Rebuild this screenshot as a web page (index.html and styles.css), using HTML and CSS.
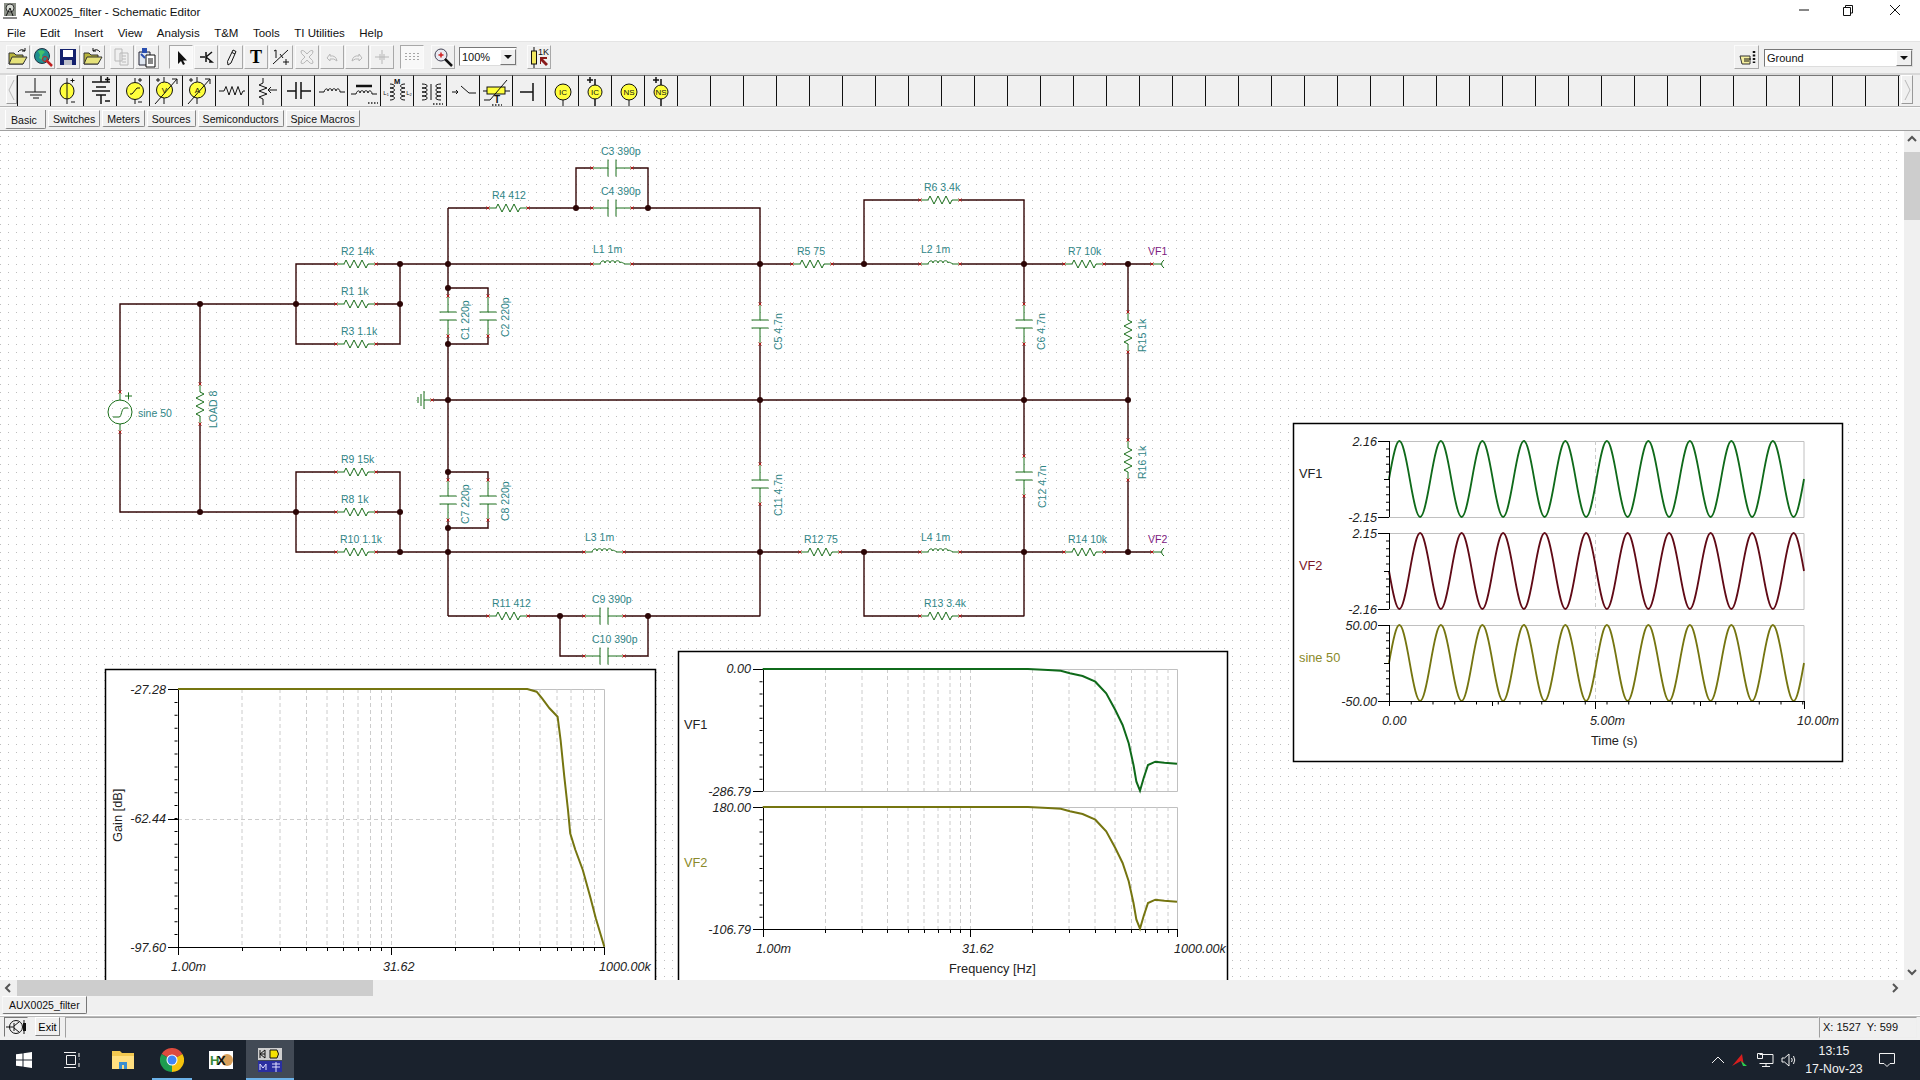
FILE: index.html
```html
<!DOCTYPE html>
<html lang="en">
<head>
<meta charset="utf-8">
<title>AUX0025_filter - Schematic Editor</title>
<link rel="stylesheet" href="styles.css">
</head>
<body>
<header class="titlebar">
  <svg class="appicon" width="16" height="18" viewBox="0 0 16 18"><rect x="2" y="1" width="12" height="13" fill="#8a8f86"/><circle cx="8" cy="6" r="4" fill="#d8dcd4" stroke="#333"/><path class="k" d="M4 14l4-8 3 8M1 16h14"/></svg>
  <span class="title">AUX0025_filter - Schematic Editor</span>
  <div class="winctl">
    <svg width="12" height="12" viewBox="0 0 12 12"><path class="k" d="M1 6H11"/></svg>
    <svg width="12" height="12" viewBox="0 0 12 12"><path class="k" d="M1.500 3.500H8.500V11.500H1.500ZM3.500 3.500V1.500H10.500V9H8.500"/></svg>
    <svg width="12" height="12" viewBox="0 0 12 12"><path class="k" d="M1 1L11 11M11 1L1 11"/></svg>
  </div>
</header>
<nav class="menubar">
  <span>File</span><span>Edit</span><span>Insert</span><span>View</span><span>Analysis</span><span>T&amp;M</span><span>Tools</span><span>TI Utilities</span><span>Help</span>
</nav>
<section class="toolbar">
  <button class="tb"><svg viewBox="0 0 22 22"><path class="folder" d="M2 7H7L9 9H16V18H2Z"/><path class="folder2" d="M2 18L5 11H20L16 18Z"/><path class="k" d="M11 6Q14 2 18 5M18 2V5H15"/></svg></button>
  <button class="tb"><svg viewBox="0 0 22 22"><circle cx="10" cy="10" r="7.500" fill="#1f8f8f" stroke="#234"/><path d="M6 5Q11 3 13 6L10 9L11 14L7 12L8 9Z" fill="#44c26a"/><path d="M14 14L20 20" stroke="#c02020" stroke-width="2.500"/><circle cx="13" cy="13" r="2.500" fill="none" stroke="#c02020"/></svg></button>
  <button class="tb"><svg viewBox="0 0 22 22"><path d="M3 3H19V19H3Z" fill="#14216e"/><rect x="6" y="4" width="10" height="7" fill="#fff"/><rect x="7" y="14" width="8" height="5" fill="#bfc2cc"/></svg></button>
  <button class="tb"><svg viewBox="0 0 22 22"><path class="folder" d="M2 7H7L9 9H16V18H2Z"/><path class="folder2" d="M2 18L5 11H20L16 18Z"/><path class="k" d="M18 6Q15 2 11 5M11 2V5H14"/></svg></button>
  <button class="tb ml4"><svg viewBox="0 0 22 22"><path class="off" d="M4 3H11V15H4ZM9 7H17V19H9Z"/><path class="off" d="M11 10H15M11 13H15M11 16H15"/></svg></button>
  <button class="tb"><svg viewBox="0 0 22 22"><path d="M3 6H14V19H3Z" fill="#dfe6f0" stroke="#223"/><rect x="6" y="2" width="5" height="5" fill="#2a4fb0"/><path d="M10 9H19V21H10Z" fill="#fff" stroke="#111"/><path class="k" d="M12 13H17M12 15H17M12 17H17"/><path d="M5 8L9 12" stroke="#2a4fb0" stroke-width="2"/></svg></button>
  <button class="tb pressed ml9"><svg viewBox="0 0 22 22"><path d="M8 5V18L11 15L13 19L15 18L13 14.500H17Z" fill="#111"/></svg></button>
  <button class="tb"><svg viewBox="0 0 22 22"><path class="k2" d="M5 11H10M11 6V16M11 11L17 6M11 11L17 16H14"/></svg></button>
  <button class="tb"><svg viewBox="0 0 22 22"><path class="k" d="M13 4L16 5.500L11 17L8 19L7.500 15.500ZM12 6.500L15 8"/></svg></button>
  <button class="tb"><span class="serif-t">T</span></button>
  <button class="tb"><svg viewBox="0 0 22 22"><path class="k" d="M4 5L6 4V12M3 18L18 4M13 16H19M16 13V19"/><path class="k" d="M10 8L13 12"/></svg></button>
  <button class="tb ml1"><svg viewBox="0 0 22 22"><path class="off" d="M5 5Q7 3 11 8Q15 3 17 5Q18 7 13 11Q18 15 17 17Q15 19 11 14Q7 19 5 17Q4 15 9 11Q4 7 5 5Z"/></svg></button>
  <button class="tb"><svg viewBox="0 0 22 22"><path class="off" d="M6 12L9 8V10Q15 9 16 15Q13 12 9 13V15Z"/></svg></button>
  <button class="tb"><svg viewBox="0 0 22 22"><path class="off" d="M16 12L13 8V10Q7 9 6 15Q9 12 13 13V15Z"/></svg></button>
  <button class="tb"><svg viewBox="0 0 22 22"><path class="off" d="M11 4V18M4 11H18M9 8V14M13 8V14"/></svg></button>
  <button class="tb pressed ml5"><svg viewBox="0 0 22 22"><path class="griddots" d="M5 7V16M9 7V16M13 7V16M17 7V16"/></svg></button>
  <button class="tb ml6"><svg viewBox="0 0 22 22"><circle cx="9" cy="9" r="6" fill="#eaeaf2" stroke="#445"/><path d="M6.500 9H11.500M9 6.500V11.500" stroke="#d02020" stroke-width="1.500"/><path d="M13 13L20 20" stroke="#111" stroke-width="2.500"/></svg></button>
  <div class="combo zoomcombo ml3"><span>100%</span><i class="drop"></i></div>
  <button class="tb ml9"><svg viewBox="0 0 22 22"><path class="k" d="M6 1V5M6 18V22"/><rect x="3.500" y="5" width="5" height="13" fill="#f2e860" stroke="#111"/><text class="onek" x="10" y="9">1K</text><path d="M12 11H19V13H15L20 18L18 20L13 15V18H12Z" fill="#8a1a1a"/></svg></button>
  <div class="tbright">
    <button class="tb wide"><svg viewBox="0 0 22 22"><path d="M4 10H14V18H6Z" fill="#f6f0a0" stroke="#333"/><path class="k" d="M8 13H15M8 15H13"/><path d="M18 5V17" stroke="#111" stroke-width="2.500" stroke-dasharray="2 1.500"/></svg></button>
    <div class="combo compcombo"><span>Ground</span><i class="drop"></i></div>
  </div>
</section>
<section class="palette">
  <div class="palbtn"><svg width="7" height="22" viewBox="0 0 7 22"><path class="off" d="M6 1L1 11L6 21"/></svg></div>
  <div class="cell"><svg viewBox="0 0 32 30"><path class="k" d="M17 2V16M7 16H28M12 19H24M15 22H21"/></svg></div>
  <div class="cell"><svg viewBox="0 0 32 30"><path class="k" d="M16 2V28M19.500 4.500H23.500M21.500 2.500V6.500M20 26H24"/><ellipse class="y" cx="16" cy="15" rx="7" ry="8"/><path class="k" d="M16 7V23"/></svg></div>
  <div class="cell"><svg viewBox="0 0 32 30"><path class="k2" d="M17 0V6M8 6H26M12 11H22M8 15H26M12 19H22M17 19V28M21 3.500H26M23.500 1V6M21 25H26"/></svg></div>
  <div class="cell"><svg viewBox="0 0 32 30"><path class="k" d="M18 2V28M21 4H25M23 2V6M21 26H25"/><circle class="y" cx="18" cy="15" r="8.500"/><path class="k" d="M13 18H15L20 12H23"/></svg></div>
  <div class="cell"><svg viewBox="0 0 32 30"><path class="k" d="M14 1V28M6 4H10M8 2V6"/><circle class="y" cx="14.500" cy="14" r="8"/><path class="k" d="M5 28L27 3M22 3H27V8"/><text class="pt" x="14.500" y="17">V</text></svg></div>
  <div class="cell"><svg viewBox="0 0 32 30"><path class="k" d="M14 1V28M6 4H10M8 2V6"/><circle class="y" cx="14.500" cy="14" r="8"/><path class="k" d="M5 28L27 3M22 3H27V8"/><text class="pt" x="14.500" y="17">A</text></svg></div>
  <div class="cell"><svg viewBox="0 0 32 30"><path class="k" d="M3 15H8L10 10.500L13 19L16 10.500L19 19L22 10.500L25 19L27 15H29"/></svg></div>
  <div class="cell"><svg viewBox="0 0 32 30"><path class="k" d="M14 2V7L10 9L18 12L10 15L18 18L10 21L14 23V29M28 14H19M22 11L19 14L22 17"/></svg></div>
  <div class="cell"><svg viewBox="0 0 32 30"><path class="k2" d="M5 15H14M19 15H29M14 6V23M19 6V23"/></svg></div>
  <div class="cell"><svg viewBox="0 0 32 30"><path class="k" d="M4 16H9C10 12 13 12 13 15C13 12 17 12 17 15C17 12 21 12 21 15C21 12 25 12 25 16H30"/></svg></div>
  <div class="cell"><svg viewBox="0 0 32 30"><path d="M8 10H24" stroke="#111" stroke-width="2.500"/><path class="k" d="M3 18H8C9 14 12 14 12 17C12 14 16 14 16 17C16 14 20 14 20 17C20 14 24 14 24 18H29"/><path class="dots" d="M20 27H30"/></svg></div>
  <div class="cell"><svg viewBox="0 0 32 30"><text class="pm" x="16" y="7.500">M</text><path class="k" d="M9 8C15 8 15 12 9 12C15 12 15 16 9 16C15 16 15 20 9 20C15 20 15 24 9 24M24 8C18 8 18 12 24 12C18 12 18 16 24 16C18 16 18 20 24 20C18 20 18 24 24 24"/><text class="ps" x="5" y="19">L₁</text><text class="ps" x="28" y="19">L₂</text></svg></div>
  <div class="cell"><svg viewBox="0 0 32 30"><path class="k" d="M8 8C15 8 15 12 8 12C15 12 15 16 8 16C15 16 15 20 8 20C15 20 15 24 8 24M27 8C20 8 20 12 27 12C20 12 20 16 27 16C20 16 20 20 27 20C20 20 20 24 27 24"/><path class="k" d="M17 8V24"/><path class="dots" d="M19 28H29"/></svg></div>
  <div class="cell"><svg viewBox="0 0 32 30"><path class="k" d="M5 16H11M9 14L11 16L9 18M14 10L22 17H29"/></svg></div>
  <div class="cell"><svg viewBox="0 0 32 30"><path class="k" d="M3 15H7M25 15H30"/><rect class="y" x="7" y="11" width="18" height="7"/><path class="k" d="M4 24L10 24L27 4"/><text class="pb" x="17" y="27">T</text><path class="dots" d="M12 29H22"/></svg></div>
  <div class="cell"><svg viewBox="0 0 32 30"><path class="k2" d="M7 16H20M20 7V25"/></svg></div>
  <div class="cell"><svg viewBox="0 0 32 30"><path class="k" d="M17 24V30"/><circle class="y" cx="17" cy="16" r="8"/><text class="pt" x="17" y="19">IC</text></svg></div>
  <div class="cell"><svg viewBox="0 0 32 30"><path class="k2" d="M8 4H14M11 1V7M16 3V30"/><circle class="y" cx="16" cy="16" r="7"/><text class="pt" x="16" y="19">IC</text></svg></div>
  <div class="cell"><svg viewBox="0 0 32 30"><path class="k" d="M17 24V30"/><circle class="y" cx="17" cy="16" r="8"/><text class="pt" x="17" y="19">NS</text></svg></div>
  <div class="cell"><svg viewBox="0 0 32 30"><path class="k2" d="M8 4H14M11 1V7M16 3V30"/><circle class="y" cx="16" cy="16" r="7"/><text class="pt" x="16" y="19">NS</text></svg></div>
  <div class="cells-empty"></div>
  <div class="palbtn right"><svg width="7" height="22" viewBox="0 0 7 22"><path class="off" d="M1 1L6 11L1 21"/></svg></div>
</section>
<section class="tabs">
  <span class="tab on">Basic</span><span class="tab">Switches</span><span class="tab">Meters</span><span class="tab">Sources</span><span class="tab">Semiconductors</span><span class="tab">Spice Macros</span>
</section>
<main class="workspace">
<svg class="canvas" width="1904" height="849" viewBox="0 131 1904 849">
  <defs>
    <pattern id="dots" width="8" height="8" patternUnits="userSpaceOnUse"><rect width="1" height="1" fill="#bdbdbd"/></pattern>
    <g id="pins"><path class="pin" d="M-1.500 -1.500L1.500 1.500M-1.500 1.500L1.500 -1.500M38.500 -1.500L41.500 1.500M38.500 1.500L41.500 -1.500"/></g>
    <g id="R"><path class="g" d="M0 0H8L10 -4L14 4L18 -4L22 4L26 -4L30 4L32 0H40"/><use href="#pins"/></g>
    <g id="C"><path class="g" d="M0 0H16M24 0H40M16 -8.500V8.500M24 -8.500V8.500"/><use href="#pins"/></g>
    <g id="L"><path class="g" d="M0 0H8C9 -4 13 -4 13 -1C13 -4 18 -4 18 -1C18 -4 23 -4 23 -1C23 -4 28 -4 28 -1C28 -3 31 -1 33 0H40"/><use href="#pins"/></g>
    <circle id="n" r="3" class="node"/>
    <path id="wave" d="M0 0c8.800 -50.670 11.950 -50.670 20.750 0s11.950 50.670 20.750 0s11.950 -50.670 20.750 0s11.950 50.670 20.750 0s11.950 -50.670 20.750 0s11.950 50.670 20.750 0s11.950 -50.670 20.750 0s11.950 50.670 20.750 0s11.950 -50.670 20.750 0s11.950 50.670 20.750 0s11.950 -50.670 20.750 0s11.950 50.670 20.750 0s11.950 -50.670 20.750 0s11.950 50.670 20.750 0s11.950 -50.670 20.750 0s11.950 50.670 20.750 0s11.950 -50.670 20.750 0s11.950 50.670 20.750 0s11.950 -50.670 20.750 0s11.950 50.670 20.750 0"/>
    <path id="fcurve" d="M762.700 669H1028L1048 670L1060.800 670.700L1069.900 673.300L1082.600 676L1095.300 681.700L1106.200 693.300L1115.300 710L1122.600 725L1128.700 743.300L1133.500 765L1136.400 781.700L1140 790.700L1143.600 778.300L1148 765L1155.300 761.700L1164.400 762.700L1177 763.700"/>
  </defs>
  <rect x="0" y="131" width="1904" height="849" fill="#fff"/>
  <rect x="0" y="131" width="1904" height="849" fill="url(#dots)"/>

  <path class="w" d="M120 392V304H336M376 304H400M120 432V512H336M376 512H400M200 304V384M200 424V512
    M336 264H296V344H336M376 344H400V264M376 264H592M632 264H792M832 264H920M960 264H1064M1104 264H1152
    M448 208V296M448 336V480M448 520V616M488 208H448M528 208H592M632 208H760V304M760 344V464M760 504V616
    M576 208V168H592M632 168H648V208M448 288H488V296M488 336V344H448
    M432 400H1128M864 264V200H920M960 200H1024V304M1024 344V456M1024 496V616
    M1128 264V312M1128 352V440M1128 480V552
    M336 472H296V552H336M376 472H400V552M376 552H584M624 552H800M840 552H920M960 552H1064M1104 552H1152
    M448 472H488V480M488 520V528H448
    M448 616H488M528 616H584M624 616H760M864 552V616H920M960 616H1024
    M560 616V656H584M624 656H648V616"/>

  <use href="#R" x="336" y="264"/><use href="#R" x="336" y="304"/><use href="#R" x="336" y="344"/>
  <use href="#R" x="488" y="208"/><use href="#C" x="592" y="168"/><use href="#C" x="592" y="208"/>
  <use href="#L" x="592" y="264"/><use href="#R" x="792" y="264"/><use href="#R" x="920" y="200"/>
  <use href="#L" x="920" y="264"/><use href="#R" x="1064" y="264"/>
  <use href="#R" x="336" y="472"/><use href="#R" x="336" y="512"/><use href="#R" x="336" y="552"/>
  <use href="#L" x="584" y="552"/><use href="#R" x="800" y="552"/><use href="#L" x="920" y="552"/><use href="#R" x="1064" y="552"/>
  <use href="#R" x="488" y="616"/><use href="#C" x="584" y="616"/><use href="#C" x="584" y="656"/><use href="#R" x="920" y="616"/>
  <use href="#C" transform="translate(448 296) rotate(90)"/><use href="#C" transform="translate(488 296) rotate(90)"/>
  <use href="#C" transform="translate(448 480) rotate(90)"/><use href="#C" transform="translate(488 480) rotate(90)"/>
  <use href="#C" transform="translate(760 304) rotate(90)"/><use href="#C" transform="translate(1024 304) rotate(90)"/>
  <use href="#C" transform="translate(760 464) rotate(90)"/><use href="#C" transform="translate(1024 456) rotate(90)"/>
  <use href="#R" transform="translate(200 384) rotate(90)"/><use href="#R" transform="translate(1128 312) rotate(90)"/><use href="#R" transform="translate(1128 440) rotate(90)"/>

  <path class="g" d="M120 392V400M120 424V432M125 396H132M128.500 392.500V399.500M432 400H424M424 391V409M421 394V406M418 397V403M1152 264H1161M1164 260Q1159 264 1164 268M1152 552H1161M1164 548Q1159 552 1164 556"/>
  <circle class="g" cx="120" cy="412" r="12"/>
  <path class="g" d="M113 417H119C122 417 121 408 125 408H128"/>
  <path class="pin" d="M118.500 390.500L121.500 393.500M118.500 393.500L121.500 390.500M118.500 430.500L121.500 433.500M118.500 433.500L121.500 430.500M430.500 398.500L433.500 401.500M430.500 401.500L433.500 398.500M1150.500 262.500L1153.500 265.500M1150.500 265.500L1153.500 262.500M1150.500 550.500L1153.500 553.500M1150.500 553.500L1153.500 550.500"/>

  <use href="#n" x="200" y="304"/><use href="#n" x="296" y="304"/><use href="#n" x="400" y="264"/><use href="#n" x="400" y="304"/>
  <use href="#n" x="448" y="264"/><use href="#n" x="448" y="288"/><use href="#n" x="448" y="344"/><use href="#n" x="448" y="400"/>
  <use href="#n" x="448" y="472"/><use href="#n" x="448" y="528"/><use href="#n" x="448" y="552"/><use href="#n" x="400" y="552"/>
  <use href="#n" x="400" y="512"/><use href="#n" x="296" y="512"/><use href="#n" x="200" y="512"/><use href="#n" x="576" y="208"/>
  <use href="#n" x="648" y="208"/><use href="#n" x="760" y="264"/><use href="#n" x="760" y="400"/><use href="#n" x="760" y="552"/>
  <use href="#n" x="864" y="264"/><use href="#n" x="1024" y="264"/><use href="#n" x="1024" y="400"/><use href="#n" x="1128" y="264"/>
  <use href="#n" x="1128" y="400"/><use href="#n" x="864" y="552"/><use href="#n" x="1024" y="552"/><use href="#n" x="1128" y="552"/>
  <use href="#n" x="560" y="616"/><use href="#n" x="648" y="616"/>

  <g class="lb">
    <text x="601" y="155">C3 390p</text><text x="601" y="195">C4 390p</text><text x="492" y="199">R4 412</text>
    <text x="341" y="255">R2 14k</text><text x="341" y="295">R1 1k</text><text x="341" y="335">R3 1.1k</text>
    <text x="593" y="253">L1 1m</text><text x="341" y="463">R9 15k</text><text x="341" y="503">R8 1k</text><text x="340" y="543">R10 1.1k</text>
    <text x="585" y="541">L3 1m</text><text x="804" y="543">R12 75</text><text x="921" y="541">L4 1m</text><text x="1068" y="543">R14 10k</text>
    <text x="492" y="607">R11 412</text><text x="592" y="603">C9 390p</text><text x="592" y="643">C10 390p</text><text x="924" y="607">R13 3.4k</text>
    <text x="797" y="255">R5 75</text><text x="924" y="191">R6 3.4k</text><text x="921" y="253">L2 1m</text><text x="1068" y="255">R7 10k</text>
    <text x="138" y="417">sine 50</text>
    <text transform="translate(469 340) rotate(-90)">C1 220p</text><text transform="translate(509 337) rotate(-90)">C2 220p</text>
    <text transform="translate(782 350) rotate(-90)">C5 4.7n</text><text transform="translate(1045 350) rotate(-90)">C6 4.7n</text>
    <text transform="translate(1146 352) rotate(-90)">R15 1k</text><text transform="translate(217 428) rotate(-90)">LOAD 8</text>
    <text transform="translate(469 524) rotate(-90)">C7 220p</text><text transform="translate(509 521) rotate(-90)">C8 220p</text>
    <text transform="translate(782 516) rotate(-90)">C11 4.7n</text><text transform="translate(1046 508) rotate(-90)">C12 4.7n</text>
    <text transform="translate(1146 479) rotate(-90)">R16 1k</text>
  </g>
  <text class="lb vf" x="1148" y="255">VF1</text><text class="lb vf" x="1148" y="543">VF2</text>

  <!-- time graph -->
  <rect class="frame" x="1293.500" y="423.500" width="549" height="338"/>
  <path class="plot" d="M1389 441.500H1804V517.500H1389M1389 533.500H1804V609.500H1389M1389 625.500H1804V701.500"/>
  <path class="grid" d="M1595.500 441V517M1595.500 533V609M1595.500 625V701"/>
  <use href="#wave" class="t1" x="1389" y="479"/>
  <use href="#wave" class="t2" transform="translate(1389 571) scale(1 -1)"/>
  <use href="#wave" class="t3" x="1389" y="663"/>
  <path class="ax" d="M1389.500 441V517M1378 441.500H1389M1378 517.500H1389M1384 479.500H1389M1389.500 533V609M1378 533.500H1389M1378 609.500H1389M1384 571.500H1389M1389.500 625V706M1378 625.500H1389M1378 701.500H1804M1384 663.500H1389M1595.500 701V709M1804.500 701V709M1492.500 701V706M1700.500 701V706"/>
  <path class="minor" d="M1387.500 441V517M1387.500 533V609M1387.500 625V701"/>
  <path class="minorx" d="M1389 703H1804"/>
  <g class="tick">
    <text x="1377" y="446">2.16</text><text x="1377" y="522">-2.15</text><text x="1377" y="538">2.15</text><text x="1377" y="614">-2.16</text><text x="1377" y="630">50.00</text><text x="1377" y="706">-50.00</text>
  </g>
  <g class="tickx"><text x="1382" y="725">0.00</text><text x="1590" y="725">5.00m</text><text x="1797" y="725">10.00m</text></g>
  <text class="cap" x="1299" y="478">VF1</text><text class="cap c2" x="1299" y="570">VF2</text><text class="cap c3" x="1299" y="662">sine 50</text>
  <text class="cap" x="1591" y="745">Time (s)</text>

  <!-- gain graph -->
  <rect class="frame" x="105.500" y="669.500" width="550" height="340"/>
  <path class="plot" d="M178 689.500H604.500V947"/>
  <path class="grid" d="M242 689V947M280 689V947M306.500 689V947M327 689V947M343.500 689V947M358 689V947M370.500 689V947M381.500 689V947M391.500 689V947M455.500 689V947M493 689V947M519.500 689V947M540 689V947M557 689V947M571 689V947M583.500 689V947M594.500 689V947M178 819.500H604"/>
  <path class="ax" d="M178.500 689V955M168 689.500H178M168 819.500H178M168 947.500H604.500M604.500 947V955M391.500 947V955M242.500 947V951M280.500 947V951M306.500 947V951M327.500 947V951M343.500 947V951M358.500 947V951M370.500 947V951M381.500 947V951M455.500 947V951M493.500 947V951M519.500 947V951M540.500 947V951M557.500 947V951M571.500 947V951M583.500 947V951M594.500 947V951"/>
  <path class="minorg" d="M176 689V947"/>
  <path class="t3 thick" d="M178 689H527.300L536.600 691.700L542.100 698.300L549.500 708.300L557.600 716.700L560.600 740L564.300 776.700L568 810L570.200 833.300L575.400 850L582.800 870L590.200 896.700L595.800 918.300L604.300 946.700"/>
  <g class="tick"><text x="166" y="694">-27.28</text><text x="166" y="823">-62.44</text><text x="166" y="952">-97.60</text></g>
  <g class="tickx"><text x="171" y="971">1.00m</text><text x="383" y="971">31.62</text><text x="599" y="971">1000.00k</text></g>
  <text class="cap" transform="translate(122 842) rotate(-90)">Gain [dB]</text>

  <!-- frequency graph -->
  <rect class="frame" x="678.500" y="651.500" width="549" height="340"/>
  <path class="plot" d="M763 669.500H1177.500V791.500H763M763 807.500H1177.500V929"/>
  <path class="grid" d="M825.500 669V791M862 669V791M887.500 669V791M908 669V791M924 669V791M938 669V791M950 669V791M960.500 669V791M970.500 669V791M1032.500 669V791M1069 669V791M1095 669V791M1115 669V791M1131.500 669V791M1145 669V791M1157 669V791M1168 669V791M825.500 807V929M862 807V929M887.500 807V929M908 807V929M924 807V929M938 807V929M950 807V929M960.500 807V929M970.500 807V929M1032.500 807V929M1069 807V929M1095 807V929M1115 807V929M1131.500 807V929M1145 807V929M1157 807V929M1168 807V929"/>
  <path class="ax" d="M763.500 669V791M763.500 807V937M753 669.500H763M753 791.500H763M753 807.500H763M753 929.500H1177.500M1177.500 929V937M970.500 929V937M825.500 929V933M862.500 929V933M887.500 929V933M908.500 929V933M924.500 929V933M938.500 929V933M950.500 929V933M960.500 929V933M1032.500 929V933M1069.500 929V933M1095.500 929V933M1115.500 929V933M1131.500 929V933M1145.500 929V933M1157.500 929V933M1168.500 929V933"/>
  <path class="minorf" d="M761 669V791M761 807V929"/>
  <use href="#fcurve" class="t1 thick"/>
  <use href="#fcurve" class="t3 thick" y="138"/>
  <g class="tick"><text x="751" y="673">0.00</text><text x="751" y="796">-286.79</text><text x="751" y="812">180.00</text><text x="751" y="934">-106.79</text></g>
  <g class="tickx"><text x="756" y="953">1.00m</text><text x="962" y="953">31.62</text><text x="1174" y="953">1000.00k</text></g>
  <text class="cap" x="684" y="729">VF1</text><text class="cap c3" x="684" y="867">VF2</text>
  <text class="cap" x="949" y="973">Frequency [Hz]</text>
</svg>
<aside class="vscroll">
  <svg class="arrow" viewBox="0 0 16 16"><path class="chev" d="M4 10L8 6L12 10"/></svg>
  <div class="vthumb"></div>
  <div class="spacer"></div>
  <svg class="arrow" viewBox="0 0 16 16"><path class="chev" d="M4 6L8 10L12 6"/></svg>
</aside>
</main>
<div class="hscroll">
  <svg class="arrow" viewBox="0 0 16 16"><path class="chev" d="M10 4L6 8L10 12"/></svg>
  <div class="hthumb"></div>
  <div class="spacer"></div>
  <svg class="arrow" viewBox="0 0 16 16"><path class="chev" d="M6 4L10 8L6 12"/></svg>
  <div class="corner"></div>
</div>
<div class="doctabs"><span class="doctab">AUX0025_filter</span></div>
<footer class="status">
  <span class="staticon"><svg width="22" height="18" viewBox="0 0 22 18"><circle cx="11" cy="9" r="6.500" fill="none" stroke="#111"/><path class="k" d="M1 9H9M9 5V13M9 8L14 4M9 10L14 14M19 2V16"/><rect x="18" y="5" width="3" height="8" fill="#111"/></svg></span>
  <button class="exit">Exit</button>
  <div class="sfield"></div>
  <div class="coords">X: 1527&nbsp; Y: 599</div>
</footer>
<footer class="taskbar">
  <span class="tk start"><svg width="16" height="16" viewBox="0 0 16 16"><path d="M0 2.300L6.500 1.400V7.500H0ZM7.500 1.300L16 0V7.500H7.500ZM0 8.500H6.500V14.600L0 13.700ZM7.500 8.500H16V16L7.500 14.700Z" fill="#fff"/></svg></span>
  <span class="tk"><svg width="18" height="16" viewBox="0 0 18 16"><path class="wl" d="M1 .500H13M3.500 3.500H12.500V12.500H3.500ZM1 15.500H13M16 1V5M16 7H16.500M16 11V15"/></svg></span>
  <span class="tk apps"><svg width="24" height="20" viewBox="0 0 24 20"><path d="M1 1H9L11 3H23V19H1Z" fill="#f2c850"/><path d="M1 6H23V19H1Z" fill="#ffdf80"/><path d="M8 19V12H16V19H13V15H11V19Z" fill="#3a8fd0"/></svg></span>
  <span class="tk app2 running"><svg width="24" height="24" viewBox="0 0 24 24"><path d="M12 12L1.600 6A12 12 0 0 1 22.400 6Z" fill="#dd4b3e"/><path d="M12 12L22.400 6A12 12 0 0 1 12 24Z" fill="#f4c20d"/><path d="M12 12L12 24A12 12 0 0 1 1.600 6Z" fill="#1e9c50"/><circle cx="12" cy="12" r="5.500" fill="#fff"/><circle cx="12" cy="12" r="4.500" fill="#4285f4"/></svg></span>
  <span class="tk app2"><svg width="24" height="18" viewBox="0 0 24 18"><rect width="24" height="18" fill="#fff"/><circle cx="18" cy="9" r="6" fill="#d9a05a"/><text class="hx" x="1" y="14">H</text><text class="hx2" x="8" y="14">X</text></svg></span>
  <span class="tk app2 active"><svg width="24" height="24" viewBox="0 0 24 24"><rect width="24" height="12" fill="#cfcfcf"/><path d="M2 2V10M2 6H7M7 2V10M2 6L7 2M2 6L7 10" fill="none" stroke="#111"/><path d="M12 2H19Q22 6 19 10H12Z" fill="#f4e200" stroke="#111"/><rect y="13" width="24" height="11" fill="#2a2fa0"/><path d="M2 22V16L5 20L8 16V22M14 16H22M14 19H22M18 14V24" fill="none" stroke="#e0e0ff"/></svg></span>
  <div class="tray">
    <svg width="14" height="8" viewBox="0 0 14 8"><path class="wl" d="M1 7L7 1L13 7"/></svg>
    <svg width="18" height="14" viewBox="0 0 18 14"><path d="M0 13L10 1L12 13L9 8Z" fill="#d81e1e"/><path d="M9 8L15 13H11Z" fill="#28d050"/></svg>
    <svg width="17" height="14" viewBox="0 0 17 14"><path class="wl" d="M2.500 1.500H16V10.500H2.500M9 10.500V13.500M5 13.500H13M.500 .500H5.500V5.500H.500Z"/></svg>
    <svg width="17" height="14" viewBox="0 0 17 14"><path class="wl" d="M1 5V9H3.500L8 13V1L3.500 5ZM10.500 5Q12 7 10.500 9M12.500 3Q15 7 12.500 11"/></svg>
    <div class="clock"><span>13:15</span><span>17-Nov-23</span></div>
    <svg class="note" width="16" height="14" viewBox="0 0 16 14"><path class="wl" d="M.500 .500H15.500V10.500H11L8 13.500L5 10.500H.500Z"/></svg>
  </div>
</footer>
</body>
</html>
```

FILE: styles.css
```css
* { box-sizing: border-box; }
html, body { margin: 0; padding: 0; }
body {
  width: 1920px; height: 1080px; overflow: hidden;
  display: flex; flex-direction: column;
  font: 11.500px "Liberation Sans", Arial, sans-serif;
  color: #111; background: #f0f0f0;
}
svg { display: block; }

/* shared icon strokes */
.k { fill: none; stroke: #111; stroke-width: 1; }
.k2 { fill: none; stroke: #111; stroke-width: 1.500; }
.y { fill: #ffff3c; stroke: #111; stroke-width: 1; }
.off { fill: none; stroke: #b8b8b8; stroke-width: 1; }
.folder { fill: #b8b43c; stroke: #333; }
.folder2 { fill: #e6e27a; stroke: #333; }
.griddots { fill: none; stroke: #555; stroke-dasharray: 1 2; }
.dots { fill: none; stroke: #222; stroke-width: 1.500; stroke-dasharray: 1.500 1.500; }
.pt { font: 8px "Liberation Sans", sans-serif; text-anchor: middle; fill: #111; }
.ps { font: 6px "Liberation Sans", sans-serif; text-anchor: middle; fill: #111; }
.pb { font: bold 10px "Liberation Sans", sans-serif; text-anchor: middle; fill: #111; }
.pm { font: bold 7.500px "Liberation Sans", sans-serif; text-anchor: middle; fill: #111; }
.onek { font: 9px "Liberation Sans", sans-serif; fill: #111; }

/* title + menu */
.titlebar { height: 22px; flex: none; background: #fff; display: flex; align-items: center; padding-left: 2px; }
.title { margin: 1px 0 0 5px; font-size: 11.700px; }
.winctl { margin: 0 0 2px auto; display: flex; gap: 32px; padding-right: 19px; }
.winctl svg:last-child { margin-left: 3px; }
.menubar { height: 19px; flex: none; background: #fff; display: flex; align-items: center; gap: 14.500px; padding: 2px 0 0 7px; }

/* toolbar */
.toolbar { height: 32px; flex: none; display: flex; padding: 3px 0 0 6px; gap: 1px; border-top: 1px solid #e4e4e4; }
.tb {
  width: 24px; height: 24px; padding: 0; flex: none;
  background: #f0f0f0; border: 1px solid; border-color: #fbfbfb #a8a8a8 #a8a8a8 #fbfbfb;
  display: flex; align-items: center; justify-content: center;
}
.tb svg { width: 22px; height: 22px; }
.tb.pressed { background: #f8f8f8; border-color: #a8a8a8 #fbfbfb #fbfbfb #a8a8a8; }
.tb.wide { width: 25px; }
.serif-t { font: bold 18px "Liberation Serif", serif; line-height: 20px; }
.ml1 { margin-left: 1px; } .ml3 { margin-left: 3px; } .ml4 { margin-left: 4px; }
.ml5 { margin-left: 5px; } .ml6 { margin-left: 6px; } .ml9 { margin-left: 9px; }
.combo {
  height: 19px; margin-top: 2px; background: #fff; border: 1px solid; border-color: #777 #ddd #ddd #777;
  display: flex; align-items: center; justify-content: space-between; padding-left: 2px; font-size: 11px;
}
.zoomcombo { width: 58px; }
.compcombo { width: 149px; height: 18px; margin-top: 4px; }
.drop {
  width: 16px; height: 16px; background: #f0f0f0; border: 1px solid; border-color: #fff #777 #777 #fff;
  display: flex; align-items: center; justify-content: center;
}
.drop::before { content: ""; border: 4px solid transparent; border-top: 4px solid #111; border-bottom: 0; }
.tbright { margin-left: auto; padding-right: 7px; display: flex; gap: 5px; }

/* component palette */
.palette { height: 34px; flex: none; display: flex; padding-left: 6px; border-top: 2px solid #d8d8d8; border-bottom: 1px solid #b4b4b4; }
.palbtn { width: 11px; height: 29px; border: 1px solid; border-color: #fff #999 #999 #fff; display: flex; align-items: center; justify-content: center; flex: none; }
.palbtn.right { width: 12px; margin: 0 7px 0 1px; }
.cell { width: 33px; height: 31px; flex: none; border-left: 1px solid #111; border-top: 1px solid #777; }
.cell svg { width: 32px; height: 30px; }
.cells-empty {
  flex: 1; height: 31px; border-top: 1px solid #777;
  background-image: repeating-linear-gradient(90deg, #111 0 1px, transparent 1px 33px);
}

/* tabs */
.tabs { height: 24px; flex: none; display: flex; align-items: flex-start; gap: 2px; padding: 2px 0 0 5px; border-top: 1px solid #fafafa; border-bottom: 1px solid #a0a0a0; font-size: 10.600px; }
.tab { height: 17px; padding: 2px 4px 0 4px; background: #f0f0f0; border: 1px solid; border-color: #fff #888 #888 #fff; border-radius: 0 0 2px 2px; }
.tab.on { height: 19px; padding: 4px 8px 0 5px; border-top: 0; border-left: 1px solid #fff; }

/* workspace */
.workspace { height: 849px; flex: none; display: flex; }
.canvas { flex: none; background: #fff; }
.w { fill: none; stroke: #350808; stroke-width: 1.400; }
.g { fill: none; stroke: #1a6e1a; stroke-width: 1; }
.pin { fill: none; stroke: #b01818; stroke-width: 1; }
.node { fill: #2c0606; }
.lb { font: 10.500px "Liberation Sans", sans-serif; fill: #2f8586; }
.vf { fill: #7c2080; }
.frame { fill: #fff; stroke: #000; stroke-width: 1.500; }
.plot { fill: none; stroke: #c0c0c0; stroke-width: 1; }
.grid { fill: none; stroke: #cccccc; stroke-width: 1; stroke-dasharray: 4 3; }
.ax { fill: none; stroke: #000; stroke-width: 1; }
.minor { fill: none; stroke: #000; stroke-width: 3; stroke-dasharray: 1 6.600; }
.minorx { fill: none; stroke: #000; stroke-width: 3; stroke-dasharray: 1 20.750; }
.minorg { fill: none; stroke: #000; stroke-width: 3; stroke-dasharray: 1 11.900; }
.minorf { fill: none; stroke: #000; stroke-width: 3; stroke-dasharray: 1 11.200; }
.t1 { fill: none; stroke: #0f6a1a; stroke-width: 1.800; }
.t2 { fill: none; stroke: #600a16; stroke-width: 1.800; }
.t3 { fill: none; stroke: #757510; stroke-width: 1.800; }
.thick { stroke-width: 2; }
.tick { font: italic 12.600px "Liberation Sans", sans-serif; text-anchor: end; fill: #222; }
.tickx { font: italic 12.600px "Liberation Sans", sans-serif; fill: #222; }
.cap { font: 12.800px "Liberation Sans", sans-serif; fill: #222; }
.c2 { fill: #7a1526; }
.c3 { fill: #8a8a2a; }

/* scrollbars */
.vscroll { width: 16px; flex: none; display: flex; flex-direction: column; background: #f0f0f0; }
.arrow { width: 16px; height: 16px; flex: none; }
.chev { fill: none; stroke: #555; stroke-width: 2; }
.vthumb { height: 68px; margin-top: 5px; background: #cdcdcd; flex: none; }
.spacer { flex: 1; }
.hscroll { height: 16px; flex: none; display: flex; background: #f0f0f0; }
.hthumb { width: 356px; margin-left: 1px; background: #cdcdcd; flex: none; }
.corner { width: 17px; flex: none; }

/* doc tabs + status */
.doctabs { height: 20px; flex: none; padding-left: 2px; border-bottom: 1px solid #fff; }
.doctab { display: inline-block; height: 18px; width: 85px; padding: 2px 0 0 6px; font-size: 10.500px; border: 1px solid; border-color: #fff #777 #777 #f8f8f8; border-radius: 0 0 2px 2px; }
.status { height: 24px; flex: none; display: flex; align-items: flex-start; padding-left: 4px; border-top: 1px solid #bbb; }
.staticon { width: 24px; height: 20px; border: 1px solid; border-color: #777 #eee #eee #777; display: flex; align-items: center; justify-content: center; flex: none; }
.exit { width: 25px; height: 19px; margin-left: 7px; padding: 0; font: 11px "Liberation Sans", sans-serif; background: #f0f0f0; border: 1px solid; border-color: #fff #777 #777 #fff; flex: none; }
.sfield { width: 1754px; height: 21px; margin-left: 5px; border: 1px solid; border-color: #a0a0a0 #eee #eee #a0a0a0; flex: none; }
.coords { width: 98px; height: 21px; padding: 3px 0 0 3px; font-size: 11px; border: 1px solid; border-color: #a0a0a0 #eee #eee #a0a0a0; flex: none; }

/* windows taskbar */
.taskbar { height: 40px; flex: none; display: flex; background: #1a222d; color: #f2f2f2; }
.tk { width: 48px; height: 40px; display: flex; align-items: center; justify-content: center; flex: none; }
.tk.apps { margin-left: 3px; }
.tk.app2 { margin-left: 1px; }
.tk.active { background: #424a55; box-shadow: inset 0 -2px 0 #6cb2e8; }
.tk.running { background: linear-gradient(#6cb2e8, #6cb2e8) center bottom / 40px 2px no-repeat; }
.wl { fill: none; stroke: #f2f2f2; stroke-width: 1; }
.hx { font: bold 13px "Liberation Sans", sans-serif; fill: #3a8a3a; }
.hx2 { font: bold 13px "Liberation Sans", sans-serif; fill: #111; }
.tray { margin-left: auto; display: flex; align-items: center; gap: 7px; padding-right: 25px; }
.clock { width: 62px; margin-left: -2px; display: flex; flex-direction: column; align-items: center; gap: 4px; font-size: 12.300px; }
.note { margin-left: 7px; }
```
